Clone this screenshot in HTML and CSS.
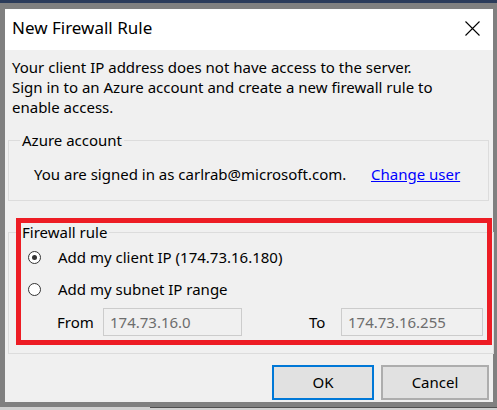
FILE: index.html
```html
<!DOCTYPE html>
<html>
<head>
<meta charset="utf-8">
<link rel="stylesheet" href="styles.css">
</head>
<body>
<div class="topbar"></div>
<div class="dialog">
  <div class="titlebar">
    <span class="title">New Firewall Rule</span>
    <svg class="close" width="15" height="15" viewBox="0 0 15 15"><path d="M0.5 0.5 L14.5 14.5 M14.5 0.5 L0.5 14.5" stroke="#000" stroke-width="1.1" fill="none"/></svg>
  </div>
  <div class="content">
    <p class="intro">Your client IP address does not have access to the server.<br>Sign in to an Azure account and create a new firewall rule to<br>enable access.</p>
    <fieldset class="group account">
      <legend>Azure account</legend>
      <div class="signed">
        <span>You are signed in as carlrab@microsoft.com.</span>
        <a class="link" href="#">Change user</a>
      </div>
    </fieldset>
    <fieldset class="group rule">
      <legend>Firewall rule</legend>
      <div class="radio-row first">
        <span class="radio checked"></span>
        <span>Add my client IP (174.73.16.180)</span>
      </div>
      <div class="radio-row">
        <span class="radio"></span>
        <span>Add my subnet IP range</span>
      </div>
      <div class="range-row">
        <span class="lbl-from">From</span>
        <span class="input in-from">174.73.16.0</span>
        <span class="lbl-to">To</span>
        <span class="input in-to">174.73.16.255</span>
      </div>
    </fieldset>
    <div class="buttons">
      <span class="btn ok">OK</span>
      <span class="btn cancel">Cancel</span>
    </div>
    <div class="highlight"></div>
  </div>
</div>
<div class="taskbar"><div class="taskline"></div></div>
</body>
</html>
```
FILE: styles.css
```css
html, body {
  margin: 0;
  padding: 0;
}
body {
  width: 497px;
  height: 410px;
  overflow: hidden;
  background: #808080;
  font-family: "Noto Sans", "Open Sans", sans-serif;
  font-size: 15px;
  line-height: 20px;
  color: #000;
}
.topbar {
  height: 3px;
  background: #2b3b5a;
}
.dialog {
  margin: 6px 4px 0 5px;
  width: 488px;
  height: 393px;
  display: flex;
  flex-direction: column;
}
.titlebar {
  height: 41px;
  background: #fff;
  display: flex;
  align-items: center;
  justify-content: space-between;
  padding: 0 13px 0 7px;
}
.title {
  font-size: 17px;
  line-height: 20px;
  padding-bottom: 3px;
}
.close {
  display: block;
  margin-bottom: 3px;
}
.content {
  flex: 1;
  background: #f0f0f0;
  position: relative;
  padding-top: 7px;
}
.intro {
  margin: 0 0 0 7px;
  white-space: nowrap;
}
.group {
  margin: 0 4px 0 3px;
  border: 1px solid #dcdcdc;
  padding: 0 10px 0 11px;
}
.group legend {
  padding: 0 2px;
}
.account {
  margin-top: 13px;
  padding-top: 14px;
  padding-bottom: 16px;
}
.signed {
  display: flex;
  padding-left: 14px;
  gap: 0;
}
.signed span {
  width: 337px;
}
.link {
  color: #0000ff;
  text-decoration: underline;
}
.rule {
  margin-top: 21px;
  padding-top: 5px;
  padding-bottom: 17px;
}
.radio-row {
  display: flex;
  align-items: center;
  padding-left: 8px;
  gap: 17px;
  height: 20px;
}
.radio-row + .radio-row {
  margin-top: 12px;
}
.radio {
  width: 11px;
  height: 11px;
  border: 1px solid #333;
  border-radius: 50%;
  background: #fff;
  display: flex;
  align-items: center;
  justify-content: center;
}
.radio.checked::after {
  content: "";
  width: 5px;
  height: 5px;
  border-radius: 50%;
  background: #333;
}
.range-row {
  display: flex;
  align-items: center;
  margin-top: 9px;
  padding-left: 37px;
}
.lbl-from {
  width: 46px;
}
.input {
  height: 26px;
  line-height: 26px;
  border: 1px solid #cccccc;
  background: #f0f0f0;
  color: #6d6d6d;
  padding-left: 6px;
  box-sizing: content-box;
}
.in-from {
  width: 131px;
}
.lbl-to {
  margin-left: 67px;
  width: 32px;
}
.in-to {
  width: 134px;
}
.buttons {
  display: flex;
  justify-content: flex-end;
  gap: 7px;
  margin: 11px 4px 0 0;
}
.btn {
  height: 31px;
  line-height: 31px;
  text-align: center;
  background: #e1e1e1;
  box-sizing: content-box;
}
.ok {
  width: 98px;
  border: 2px solid #0078d7;
}
.cancel {
  width: 104px;
  border: 2px solid #adadad;
}
.highlight {
  position: absolute;
  left: 11px;
  top: 168px;
  width: 476px;
  height: 127px;
  box-sizing: border-box;
  border: 5px solid #ed1c24;
}
.taskbar {
  margin-top: 5px;
  height: 3px;
  background: #d0d0d0;
  padding-left: 150px;
}
.taskline {
  height: 1px;
  background: #505050;
}
```
